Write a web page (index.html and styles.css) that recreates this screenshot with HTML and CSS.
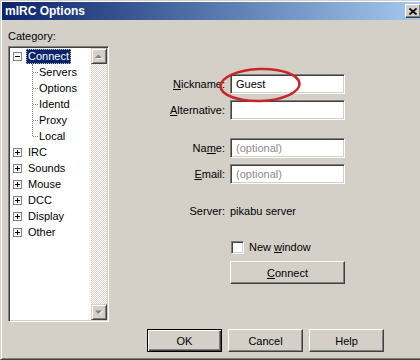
FILE: index.html
```html
<!DOCTYPE html>
<html>
<head>
    <link rel="stylesheet" href="styles.css">
</head>
<body>
    <div class="window">
        <div class="titlebar">
            <span class="title">mIRC Options</span>
            <span class="close">
                <svg width="8" height="7" viewBox="0 0 8 7"><path d="M0.5 0.5L7.5 6.5M7.5 0.5L0.5 6.5" stroke="#000" stroke-width="1.6"/></svg>
            </span>
        </div>

        <div class="main">
            <div class="category">
                <div class="cat-label">Category:</div>
                <div class="tree">
                    <ul class="tree-list">
                        <li>
                            <div class="row"><span class="expander open"></span><span class="label selected">Connect</span></div>
                            <ul class="children">
                                <li><div class="row"><span class="label">Servers</span></div></li>
                                <li><div class="row"><span class="label">Options</span></div></li>
                                <li><div class="row"><span class="label">Identd</span></div></li>
                                <li><div class="row"><span class="label">Proxy</span></div></li>
                                <li><div class="row"><span class="label">Local</span></div></li>
                            </ul>
                        </li>
                        <li><div class="row"><span class="expander"></span><span class="label">IRC</span></div></li>
                        <li><div class="row"><span class="expander"></span><span class="label">Sounds</span></div></li>
                        <li><div class="row"><span class="expander"></span><span class="label">Mouse</span></div></li>
                        <li><div class="row"><span class="expander"></span><span class="label">DCC</span></div></li>
                        <li><div class="row"><span class="expander"></span><span class="label">Display</span></div></li>
                        <li><div class="row"><span class="expander"></span><span class="label">Other</span></div></li>
                    </ul>
                    <div class="scrollbar">
                        <div class="scroll-btn">
                            <svg width="8" height="5" viewBox="0 0 8 5"><polygon points="1,5 8,5 4.5,1.5" fill="#fff"/><polygon points="0,4 7,4 3.5,0.5" fill="#808080"/></svg>
                        </div>
                        <div class="track"></div>
                        <div class="scroll-btn">
                            <svg width="8" height="5" viewBox="0 0 8 5"><polygon points="1,1 8,1 4.5,4.5" fill="#fff"/><polygon points="0,0.5 7,0.5 3.5,4" fill="#808080"/></svg>
                        </div>
                    </div>
                </div>
            </div>

            <div class="options">
                <div class="form">
                    <div class="field-row">
                        <span class="field-label"><u>N</u>ickname:</span>
                        <input class="field" type="text" value="Guest">
                    </div>
                    <div class="field-row gap-sm">
                        <span class="field-label"><u>A</u>lternative:</span>
                        <input class="field" type="text">
                    </div>
                    <div class="field-row gap-lg">
                        <span class="field-label">Na<u>m</u>e:</span>
                        <input class="field" type="text" placeholder="(optional)">
                    </div>
                    <div class="field-row gap-sm">
                        <span class="field-label"><u>E</u>mail:</span>
                        <input class="field" type="text" placeholder="(optional)">
                    </div>
                    <div class="field-row server-row">
                        <span class="field-label">Server:</span>
                        <span>pikabu server</span>
                    </div>
                    <div class="field-row check-row">
                        <span></span>
                        <span class="check"><span class="checkbox"></span><span>New <u>w</u>indow</span></span>
                    </div>
                    <div class="field-row connect-row">
                        <span></span>
                        <button class="btn btn-wide"><u>C</u>onnect</button>
                    </div>
                </div>

                <div class="buttons">
                    <button class="btn btn-default">OK</button>
                    <button class="btn">Cancel</button>
                    <button class="btn">Help</button>
                </div>
            </div>
        </div>

        <!-- red marker circle drawn over the nickname field -->
        <svg class="annotation" width="86" height="38" viewBox="0 0 86 38">
            <ellipse cx="42" cy="19" rx="39.5" ry="16" fill="none" stroke="#c9262c" stroke-width="2.6" transform="rotate(-2 42 19)"/>
        </svg>
    </div>
</body>
</html>
```

FILE: styles.css
```css
body {
    margin: 0;
    background-color: #d4d0c8;
    font-family: "Liberation Sans", Arial, sans-serif;
    font-size: 11px;
    color: #000;
    overflow: hidden;
}
.window {
    position: relative;
    width: 424px;
    height: 360px;
    box-sizing: border-box;
    border-left: 1px solid #d4d0c8;
    border-top: 1px solid #d4d0c8;
    border-bottom: 1px solid #404040;
    box-shadow: inset 1px 1px #fff, inset 0 -1px #808080;
    padding: 1px 0 1px 1px;
    display: flex;
    flex-direction: column;
}
.titlebar {
    height: 18px;
    flex-shrink: 0;
    background: linear-gradient(to right, #0a246a, #a6caf0);
    display: flex;
    align-items: center;
    justify-content: space-between;
    padding-left: 3px;
}
.title {
    color: #fff;
    font-weight: bold;
    font-size: 12px;
}
.close {
    width: 16px;
    height: 14px;
    box-sizing: border-box;
    margin-right: 3px;
    background-color: #d4d0c8;
    border: 1px solid;
    border-color: #fff #404040 #404040 #fff;
    box-shadow: inset -1px -1px #808080;
    display: flex;
    align-items: center;
    justify-content: center;
}
.main {
    flex: 1;
    display: flex;
    min-height: 0;
}

/* category tree */
.category {
    margin-left: 6px;
    width: 101px;
}
.cat-label {
    margin-top: 9px;
    margin-bottom: 3px;
    line-height: 14px;
}
.tree {
    height: 276px;
    box-sizing: border-box;
    background-color: #fff;
    border: 1px solid;
    border-color: #808080 #fff #fff #808080;
    box-shadow: inset 1px 1px #404040, inset -1px -1px #d4d0c8;
    padding: 1px;
    display: flex;
}
.tree-list {
    flex: 1;
    list-style: none;
    margin: 0;
    padding: 0;
}
.tree-list ul {
    list-style: none;
    margin: 0;
    padding: 0;
}
.row {
    height: 16px;
    display: flex;
    align-items: center;
}
.expander {
    position: relative;
    width: 9px;
    height: 9px;
    box-sizing: border-box;
    border: 1px solid #808080;
    background-color: #fff;
    margin-left: 3px;
    margin-right: 4px;
}
.expander::before {
    content: '';
    position: absolute;
    left: 1px;
    top: 3px;
    width: 5px;
    height: 1px;
    background-color: #000;
}
.expander::after {
    content: '';
    position: absolute;
    left: 3px;
    top: 1px;
    width: 1px;
    height: 5px;
    background-color: #000;
}
.expander.open::after {
    display: none;
}
.label {
    padding: 0 1px;
    line-height: 13px;
    border: 1px solid transparent;
    white-space: nowrap;
}
.label.selected {
    background-color: #0a246a;
    color: #fff;
    border: 1px dotted #c8c4bc;
}
.children {
    position: relative;
}
.children::before {
    content: '';
    position: absolute;
    left: 22px;
    top: 0;
    height: 72px;
    border-left: 1px dotted #808080;
}
.children li {
    position: relative;
}
.children li::before {
    content: '';
    position: absolute;
    left: 23px;
    top: 8px;
    width: 5px;
    border-top: 1px dotted #808080;
}
.children .row {
    padding-left: 27px;
}
.scrollbar {
    width: 16px;
    display: flex;
    flex-direction: column;
}
.scroll-btn {
    height: 16px;
    box-sizing: border-box;
    background-color: #d4d0c8;
    border: 1px solid;
    border-color: #d4d0c8 #404040 #404040 #d4d0c8;
    box-shadow: inset 1px 1px #fff, inset -1px -1px #808080;
    display: flex;
    align-items: center;
    justify-content: center;
}
.track {
    flex: 1;
    background: repeating-conic-gradient(#fff 0 25%, #d4d0c8 0 50%) 0 0 / 2px 2px;
}

/* connect options */
.options {
    flex: 1;
    display: flex;
    flex-direction: column;
    padding-left: 6px;
}
.form {
    padding-top: 54px;
}
.field-row {
    display: grid;
    grid-template-columns: 110px 115px;
    column-gap: 5px;
    align-items: center;
}
.field-label {
    text-align: right;
}
.field {
    height: 20px;
    width: 115px;
    box-sizing: border-box;
    margin: 0;
    border: 1px solid;
    border-color: #808080 #fff #fff #808080;
    box-shadow: inset 1px 1px #404040, inset -1px -1px #d4d0c8;
    padding: 0 3px 0 5px;
    font: inherit;
    color: #000;
    background-color: #fff;
    outline: none;
}
.field::placeholder {
    color: #8c8c8c;
}
.gap-sm {
    margin-top: 6px;
}
.gap-lg {
    margin-top: 18px;
}
.server-row {
    margin-top: 20px;
    line-height: 14px;
}
.check-row {
    margin-top: 22px;
    line-height: 14px;
}
.check {
    display: flex;
    align-items: center;
}
.checkbox {
    width: 13px;
    height: 13px;
    box-sizing: border-box;
    margin-left: 1px;
    margin-right: 5px;
    background-color: #fff;
    border: 1px solid;
    border-color: #808080 #fff #fff #808080;
    box-shadow: inset 1px 1px #404040, inset -1px -1px #d4d0c8;
}
.connect-row {
    margin-top: 7px;
}
.btn {
    width: 75px;
    height: 23px;
    box-sizing: border-box;
    margin: 0;
    padding: 0;
    background-color: #d4d0c8;
    border: 1px solid;
    border-color: #fff #404040 #404040 #fff;
    box-shadow: inset -1px -1px #808080;
    font: inherit;
    color: #000;
}
.btn-wide {
    width: 115px;
}
.btn-default {
    border-color: #000;
    box-shadow: inset 1px 1px #fff, inset -1px -1px #404040, inset -2px -2px #808080;
}
.buttons {
    margin-top: auto;
    margin-bottom: 6px;
    margin-left: 32px;
    display: flex;
    gap: 6px;
}
.annotation {
    position: absolute;
    left: 217px;
    top: 65px;
}
```
